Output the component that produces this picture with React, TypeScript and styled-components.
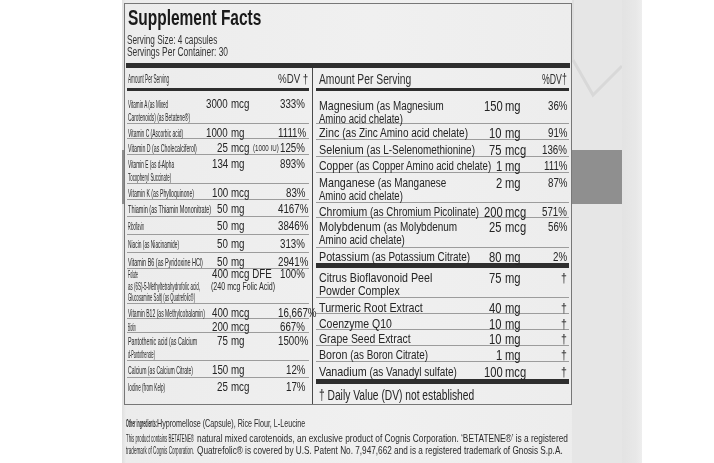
import { useEffect, useLayoutEffect, useRef, useState, ReactNode } from "react";
import styled, { createGlobalStyle } from "styled-components";

const GlobalStyle = createGlobalStyle`
  html, body {
    margin: 0;
    padding: 0;
    background: #fff;
  }
  body {
    width: 714px;
    height: 463px;
    overflow: hidden;
    font-family: "Liberation Sans", Arial, sans-serif;
    color: #2b2b2b;
  }
`;

// the photo is black and white; grayscale also keeps squeezed glyphs free of colour fringes
const Page = styled.div`
  display: flex;
  width: 714px;
  height: 463px;
  background: #fff;
  filter: grayscale(1);
`;

const Margin = styled.div<{ $w: number }>`
  flex: 0 0 ${(p) => p.$w}px;
  background: #fff;
`;

const Bottle = styled.div`
  flex: 0 0 500px;
  min-width: 0;
  display: flex;
  box-sizing: border-box;
  padding-left: 2px;
  background:
    linear-gradient(#8e8e8e, #8e8e8e) 0 150px / 2px 54px no-repeat,
    linear-gradient(90deg, #e0e0e0 0, #ececec 4px, #f0f0f0 50%, #ececec 100%);
`;

const Strip = styled.div`
  flex: 0 0 20px;
  background: linear-gradient(90deg, #e3e3e3 0, #e8e8e8 70%, #eeeeee 100%);
`;

const Side = styled.div`
  flex: 0 0 50px;
  display: flex;
  flex-direction: column;
  background: #e6e6e6;
`;

const Band = styled.div`
  height: 54px;
  background: #8f8f8f;
`;

const LabelArea = styled.div`
  flex: 0 0 448px;
  min-width: 0;
  display: flex;
  flex-direction: column;
  padding-top: 3px;
`;

const FactsBox = styled.div`
  height: 402px;
  box-sizing: border-box;
  border: 1px solid #777;
  display: flex;
  flex-direction: column;
`;

const Title = styled.div`
  margin: 3px 0 0 3px;
  height: 22px;
  line-height: 22px;
  font-size: 22px;
  font-weight: 700;
  color: #1a1a1a;
`;

const Serving = styled.div<{ $mt?: number }>`
  margin: ${(p) => p.$mt ?? 0}px 0 0 2px;
  height: 12px;
  line-height: 12px;
  font-size: 12px;
  color: #333;
`;

const ThickBar = styled.div<{ $h: number; $mt?: number; $inset?: number }>`
  flex: 0 0 ${(p) => p.$h}px;
  margin: ${(p) => p.$mt ?? 0}px ${(p) => p.$inset ?? 0}px 0;
  background: #2e2e2e;
`;

const Columns = styled.div`
  flex: 1;
  min-height: 0;
  display: grid;
  grid-template-columns: 188px minmax(0, 1fr);
`;

const Panel = styled.div<{ $left?: boolean }>`
  display: flex;
  flex-direction: column;
  min-width: 0;
  box-sizing: border-box;
  padding: ${(p) => (p.$left ? "0 3px 0 2px" : "0 2px 0 3px")};
  border-right: ${(p) => (p.$left ? "1px solid #4a4a4a" : "none")};
`;

const HeaderRow = styled.div<{ $pl: number; $pr: number; $size: number }>`
  flex: 0 0 20px;
  display: flex;
  align-items: center;
  justify-content: space-between;
  padding: 1px ${(p) => p.$pr}px 0 ${(p) => p.$pl}px;
  box-sizing: border-box;
  font-size: ${(p) => p.$size}px;
  line-height: 14px;
  color: #2e2e2e;
  white-space: nowrap;
`;

const FactRow = styled.div<{ $h: number; $pt?: number; $cols: string; $last?: boolean; $lh?: number }>`
  flex: 0 0 ${(p) => p.$h}px;
  min-height: 0;
  display: grid;
  grid-template-columns: ${(p) => p.$cols};
  align-items: start;
  align-content: start;
  box-sizing: border-box;
  padding-top: ${(p) => p.$pt ?? 3}px;
  border-bottom: ${(p) => (p.$last ? "none" : "1px solid #9c9c9c")};
  line-height: ${(p) => p.$lh ?? 12}px;
`;

const LeftName = styled.div`
  display: flex;
  flex-direction: column;
  padding-left: 1px;
  font-size: 11px;
  color: #262626;
  white-space: nowrap;
`;

const RightName = styled.div`
  display: flex;
  flex-direction: column;
  padding-left: 3px;
  font-size: 13.5px;
  line-height: 12.5px;
  color: #242424;
  white-space: nowrap;
`;

const Paren = styled.span`
  font-size: 12.5px;
`;

const Amount = styled.div<{ $size: number }>`
  display: grid;
  grid-template-columns: 28px 1fr;
  font-size: ${(p) => p.$size}px;
  color: #242424;
  white-space: nowrap;
`;

const Num = styled.span`
  text-align: right;
`;

const Unit = styled.span`
  padding-left: 3px;
`;

const UnitNote = styled.span`
  font-size: 9.5px;
  color: #2e2e2e;
`;

const AmountNote = styled.div`
  grid-column: 1 / -1;
  padding-left: 11px;
  font-size: 11.5px;
  color: #2a2a2a;
`;

const Dv = styled.div<{ $pr: number; $size: number }>`
  text-align: right;
  padding-right: ${(p) => p.$pr}px;
  font-size: ${(p) => p.$size}px;
  color: #242424;
  white-space: nowrap;
`;

const Footnote = styled.div`
  flex: 1;
  display: flex;
  align-items: center;
  padding: 1px 0 0 3px;
  font-size: 14px;
  color: #242424;
  white-space: nowrap;
`;

const Fine = styled.div<{ $mt: number }>`
  margin-top: ${(p) => p.$mt}px;
  padding-left: 2px;
  height: 12px;
  line-height: 12px;
  font-size: 11.5px;
  color: #2a2a2a;
  white-space: nowrap;
`;

const FitBox = styled.span`
  display: inline-block;
  white-space: nowrap;
  vertical-align: top;
`;

const FitInner = styled.span`
  display: inline-block;
  transform-origin: 0 50%;
`;

// the label curves round the bottle, so its text is narrower than any font:
// squeeze a piece of text to the width it has in the photo (w), or by a ratio (k)
function Fit({ w, k = 0.8, children }: { w?: number; k?: number; children: ReactNode }) {
  const ref = useRef<HTMLSpanElement>(null);
  const [box, setBox] = useState<{ w: number; k: number } | null>(null);
  const measure = () => {
    const n = ref.current?.offsetWidth ?? 0;
    if (n > 0) setBox(w ? { w, k: w / n } : { w: n * k, k });
  };
  useLayoutEffect(measure, [w, k]);
  useEffect(() => {
    document.fonts?.ready.then(measure);
  }, [w, k]);
  return (
    <FitBox style={{ width: box?.w ?? w }}>
      <FitInner ref={ref} style={{ transform: `scaleX(${box?.k ?? 1})` }}>
        {children}
      </FitInner>
    </FitBox>
  );
}

type Vitamin = {
  name: [string, number][];
  num: string;
  unit: string;
  iu?: boolean;
  note?: string;
  dv: string;
  h: number;
  pt?: number;
  lh?: number;
};

const vitamins: Vitamin[] = [
  { name: [["Vitamin A (as Mixed", 40], ["Carotenoids) (as Betatene®)", 62]], num: "3000", unit: "mcg", dv: "333%", h: 33, pt: 7, lh: 13 },
  { name: [["Vitamin C (Ascorbic acid)", 55]], num: "1000", unit: "mg", dv: "1111%", h: 15 },
  { name: [["Vitamin D (as Cholecalciferol)", 69]], num: "25", unit: "mcg", iu: true, dv: "125%", h: 16 },
  { name: [["Vitamin E (as d-Alpha", 46], ["Tocopheryl Succinate)", 43]], num: "134", unit: "mg", dv: "893%", h: 29, pt: 3, lh: 13 },
  { name: [["Vitamin K (as Phylloquinone)", 66]], num: "100", unit: "mcg", dv: "83%", h: 16 },
  { name: [["Thiamin (as Thiamin Mononitrate)", 83]], num: "50", unit: "mg", dv: "4167%", h: 17 },
  { name: [["Riboflavin", 16]], num: "50", unit: "mg", dv: "3846%", h: 18 },
  { name: [["Niacin (as Niacinamide)", 51]], num: "50", unit: "mg", dv: "313%", h: 18 },
  { name: [["Vitamin B6 (as Pyridoxine HCl)", 75]], num: "50", unit: "mg", dv: "2941%", h: 16 },
  {
    name: [["Folate", 10], ["as (6S)-5-Methyltetrahydrofolic acid,", 72], ["Glucosamine Salt) (as Quatrefolic®)", 67]],
    num: "400",
    unit: "mcg DFE",
    note: "(240 mcg Folic Acid)",
    dv: "100%",
    h: 35,
    pt: 0,
    lh: 11.5,
  },
  { name: [["Vitamin B12 (as Methylcobalamin)", 77]], num: "400", unit: "mcg", dv: "16,667%", h: 15 },
  { name: [["Biotin", 8]], num: "200", unit: "mcg", dv: "667%", h: 14, pt: 2 },
  { name: [["Pantothenic acid (as Calcium", 69], ["d-Pantothenate)", 27]], num: "75", unit: "mg", dv: "1500%", h: 28, pt: 2, lh: 13 },
  { name: [["Calcium (as Calcium Citrate)", 65]], num: "150", unit: "mg", dv: "12%", h: 17 },
  { name: [["Iodine (from Kelp)", 37]], num: "25", unit: "mcg", dv: "17%", h: 26, pt: 3 },
];

type Mineral = {
  name: string;
  paren?: string;
  w: number;
  more?: string;
  moreW?: number;
  small?: boolean;
  num: string;
  unit: string;
  dv: string;
  h: number;
  pt?: number;
  last?: boolean;
};

const minerals: Mineral[] = [
  { name: "Magnesium", paren: "(as Magnesium", w: 125, more: "Amino acid chelate)", moreW: 84, small: true, num: "150", unit: "mg", dv: "36%", h: 33, pt: 9 },
  { name: "Zinc", paren: "(as Zinc Amino acid chelate)", w: 149, num: "10", unit: "mg", dv: "91%", h: 16 },
  { name: "Selenium", paren: "(as L-Selenomethionine)", w: 156, num: "75", unit: "mcg", dv: "136%", h: 17, pt: 4 },
  { name: "Copper", paren: "(as Copper Amino acid chelate)", w: 172, num: "1", unit: "mg", dv: "111%", h: 16 },
  { name: "Manganese", paren: "(as Manganese", w: 127, more: "Amino acid chelate)", moreW: 84, small: true, num: "2", unit: "mg", dv: "87%", h: 30, pt: 4 },
  { name: "Chromium", paren: "(as Chromium Picolinate)", w: 160, num: "200", unit: "mcg", dv: "571%", h: 15 },
  { name: "Molybdenum", paren: "(as Molybdenum", w: 138, more: "Amino acid chelate)", moreW: 86, small: true, num: "25", unit: "mcg", dv: "56%", h: 30, pt: 3 },
  { name: "Potassium", paren: "(as Potassium Citrate)", w: 151, num: "80", unit: "mg", dv: "2%", h: 15, last: true },
];

const extras: Mineral[] = [
  { name: "Citrus Bioflavonoid Peel", w: 113, more: "Powder Complex", moreW: 81, num: "75", unit: "mg", dv: "†", h: 30, pt: 4 },
  { name: "Turmeric Root Extract", w: 104, num: "40", unit: "mg", dv: "†", h: 16, pt: 4 },
  { name: "Coenzyme Q10", w: 73, num: "10", unit: "mg", dv: "†", h: 16, pt: 4 },
  { name: "Grape Seed Extract", w: 92, num: "10", unit: "mg", dv: "†", h: 16 },
  { name: "Boron", paren: "(as Boron Citrate)", w: 109, num: "1", unit: "mg", dv: "†", h: 16 },
  { name: "Vanadium", paren: "(as Vanadyl sulfate)", w: 138, num: "100", unit: "mcg", dv: "†", h: 17, pt: 4, last: true },
];

const LEFT_COLS = "73px 78px 1fr";
const RIGHT_COLS = "158px 68px 1fr";

function VitaminRow({ v, last }: { v: Vitamin; last: boolean }) {
  return (
    <FactRow $cols={LEFT_COLS} $h={v.h} $pt={v.pt} $lh={v.lh} $last={last}>
      <LeftName>
        {v.name.map(([text, w]) => (
          <div key={text}>
            <Fit w={w}>{text}</Fit>
          </div>
        ))}
      </LeftName>
      <Amount $size={12.5}>
        <Num>
          <Fit k={0.78}>{v.num}</Fit>
        </Num>
        <Unit>
          <Fit k={0.78}>{v.unit}</Fit>
          {v.iu && (
            <>
              {" "}
              <UnitNote>
                <Fit w={26}>(1000 IU)</Fit>
              </UnitNote>
            </>
          )}
        </Unit>
        {v.note && (
          <AmountNote>
            <Fit w={64}>{v.note}</Fit>
          </AmountNote>
        )}
      </Amount>
      <Dv $pr={4} $size={12.5}>
        <Fit k={0.78}>{v.dv}</Fit>
      </Dv>
    </FactRow>
  );
}

function MineralRow({ m }: { m: Mineral }) {
  return (
    <FactRow $cols={RIGHT_COLS} $h={m.h} $pt={m.pt} $last={m.last}>
      <RightName>
        <div>
          <Fit w={m.w}>
            {m.name}
            {m.paren && <Paren> {m.paren}</Paren>}
          </Fit>
        </div>
        {m.more && (
          <div>
            <Fit w={m.moreW}>{m.small ? <Paren>{m.more}</Paren> : m.more}</Fit>
          </div>
        )}
      </RightName>
      <Amount $size={14}>
        <Num>
          <Fit k={0.8}>{m.num}</Fit>
        </Num>
        <Unit>
          <Fit k={0.8}>{m.unit}</Fit>
        </Unit>
      </Amount>
      <Dv $pr={2} $size={m.dv === "†" ? 13.5 : 12.5}>
        <Fit k={0.78}>{m.dv}</Fit>
      </Dv>
    </FactRow>
  );
}

function Hexagon() {
  return (
    <svg width="50" height="150" viewBox="0 0 50 150">
      <path d="M1 60 L21 95 L50 66" fill="none" stroke="#d8d8d8" strokeWidth="3" />
      <path d="M1 0 L1 60" fill="none" stroke="#dedede" strokeWidth="2" />
    </svg>
  );
}

export default function App() {
  return (
    <>
      <GlobalStyle />
      <Page>
        <Margin $w={122} />
        <Bottle>
          <LabelArea>
            <FactsBox>
              <Title>
                <Fit w={133}>Supplement Facts</Fit>
              </Title>
              <Serving $mt={5}>
                <Fit w={90}>Serving Size: 4 capsules</Fit>
              </Serving>
              <Serving>
                <Fit w={101}>Servings Per Container: 30</Fit>
              </Serving>
              <ThickBar $h={5} $mt={5} $inset={1} />
              <Columns>
                <Panel $left>
                  <HeaderRow $pl={1} $pr={1} $size={12}>
                    <Fit w={41}>Amount Per Serving</Fit>
                    <Fit w={30}>%DV †</Fit>
                  </HeaderRow>
                  <ThickBar $h={3} />
                  {vitamins.map((v, i) => (
                    <VitaminRow key={v.name[0][0]} v={v} last={i === vitamins.length - 1} />
                  ))}
                </Panel>
                <Panel>
                  <HeaderRow $pl={3} $pr={2} $size={14}>
                    <Fit w={92}>Amount Per Serving</Fit>
                    <Fit w={25}>%DV†</Fit>
                  </HeaderRow>
                  <ThickBar $h={3} />
                  {minerals.map((m) => (
                    <MineralRow key={m.name} m={m} />
                  ))}
                  <ThickBar $h={5} />
                  {extras.map((m) => (
                    <MineralRow key={m.name} m={m} />
                  ))}
                  <ThickBar $h={5} />
                  <Footnote>
                    <Fit w={155}>† Daily Value (DV) not established</Fit>
                  </Footnote>
                </Panel>
              </Columns>
            </FactsBox>
            <Fine $mt={12}>
              <Fit w={31}>
                <b>Other ingredients:</b>
              </Fit>
              <Fit w={148}>Hypromellose (Capsule), Rice Flour, L-Leucine</Fit>
            </Fine>
            <Fine $mt={3}>
              <Fit w={68}>This product contains BETATENE®</Fit>{" "}
              <Fit w={371}>natural mixed carotenoids, an exclusive product of Cognis Corporation. ‘BETATENE®’ is a registered</Fit>
            </Fine>
            <Fine $mt={0}>
              <Fit w={68}>trademark of Cognis Corporation.</Fit>{" "}
              <Fit w={366}>Quatrefolic® is covered by U.S. Patent No. 7,947,662 and is a registered trademark of Gnosis S.p.A.</Fit>
            </Fine>
          </LabelArea>
          <Side>
            <Hexagon />
            <Band />
          </Side>
        </Bottle>
        <Strip />
        <Margin $w={72} />
      </Page>
    </>
  );
}
